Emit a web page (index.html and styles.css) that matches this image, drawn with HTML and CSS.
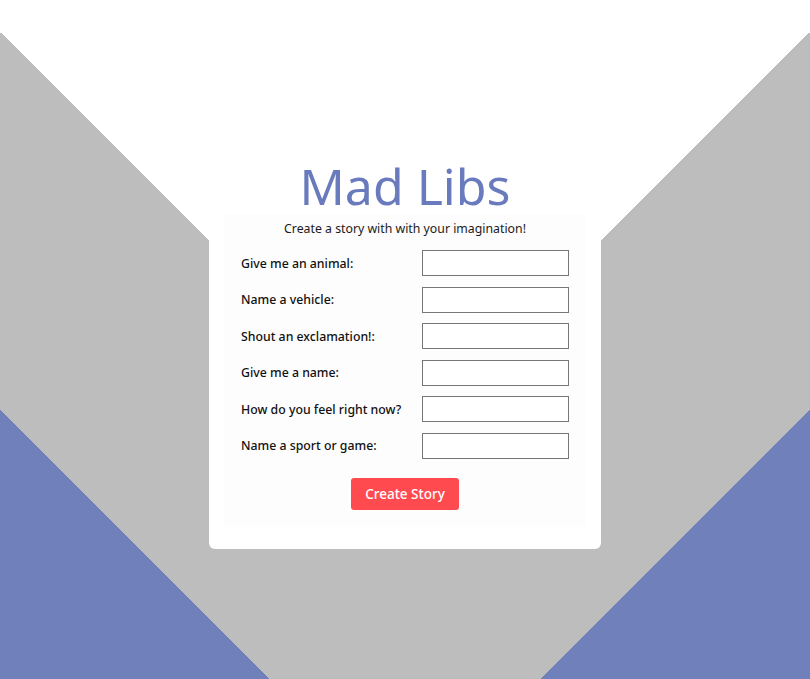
FILE: index.html
```html
<!DOCTYPE html>
<html lang="en">
<head>
<meta charset="utf-8">
<title>Mad Libs</title>
<link rel="stylesheet" href="styles.css">
</head>
<body>
<main class="page">
  <section class="card">
    <h1 class="title">Mad Libs</h1>
    <form class="panel">
      <p class="subtitle">Create a story with with your imagination!</p>
      <div class="fields">
        <label class="row"><span class="label">Give me an animal:</span><input class="input" type="text"></label>
        <label class="row"><span class="label">Name a vehicle:</span><input class="input" type="text"></label>
        <label class="row"><span class="label">Shout an exclamation!:</span><input class="input" type="text"></label>
        <label class="row"><span class="label">Give me a name:</span><input class="input" type="text"></label>
        <label class="row"><span class="label">How do you feel right now?</span><input class="input" type="text"></label>
        <label class="row"><span class="label">Name a sport or game:</span><input class="input" type="text"></label>
      </div>
      <div class="actions">
        <button class="button" type="button">Create Story</button>
      </div>
    </form>
  </section>
</main>
</body>
</html>
```

FILE: styles.css
```css
html, body {
  margin: 0;
  padding: 0;
}

body {
  min-height: 679px;
  font-family: "Noto Sans", "DejaVu Sans", sans-serif;
  background-color: #bdbdbd;
  background-image:
    linear-gradient(#ffffff, #ffffff),
    linear-gradient(to bottom left, #ffffff 50%, transparent 50%),
    linear-gradient(to bottom right, #ffffff 50%, transparent 50%),
    linear-gradient(to top right, #6f80bb 50%, transparent 50%),
    linear-gradient(to top left, #6f80bb 50%, transparent 50%);
  background-size:
    100% 33px,
    405px 405px,
    405px 405px,
    269px 269px,
    269px 269px;
  background-position:
    0 0,
    0 32px,
    405px 32px,
    left bottom,
    right bottom;
  background-repeat: no-repeat;
}

.page {
  min-height: 679px;
  display: flex;
  justify-content: center;
  align-items: flex-start;
  padding-top: 158px;
  box-sizing: border-box;
}

.card {
  width: 392px;
  background: #ffffff;
  border-radius: 6px;
  padding: 0 15px 22px;
  box-sizing: border-box;
  display: flex;
  flex-direction: column;
}

.title {
  margin: 0;
  text-align: center;
  font-weight: 400;
  font-size: 50px;
  line-height: 56px;
  color: #6a7bbd;
}

.panel {
  margin: 0;
  background: #fdfdfd;
  border-radius: 4px;
  padding: 7px 17px 17px 17px;
  display: flex;
  flex-direction: column;
}

.subtitle {
  margin: 0 0 13px;
  text-align: center;
  font-size: 12.3px;
  line-height: 16px;
  color: #1a1a1a;
}

.fields {
  display: flex;
  flex-direction: column;
  gap: 10.6px;
}

.row {
  display: flex;
  justify-content: space-between;
  align-items: center;
}

.label {
  font-size: 12.3px;
  font-weight: 500;
  color: #111111;
}

.input {
  width: 147px;
  height: 26px;
  box-sizing: border-box;
  margin: 0;
  border: 1px solid #767676;
  border-radius: 0;
  background: #ffffff;
  padding: 0 4px;
}

.actions {
  display: flex;
  justify-content: center;
  margin-top: 19px;
}

.button {
  width: 108px;
  height: 32px;
  border: none;
  border-radius: 3px;
  background: #ff4a4f;
  color: #ffffff;
  font-family: inherit;
  font-size: 13.5px;
  font-weight: 500;
  cursor: pointer;
}
```
